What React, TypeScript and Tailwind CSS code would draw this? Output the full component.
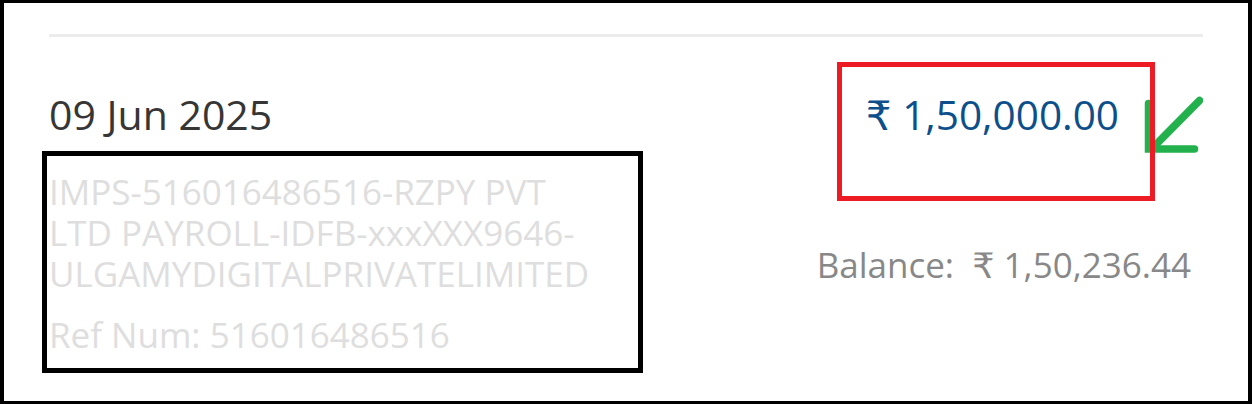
import React from 'react';

const font = { fontFamily: '"Open Sans", "DejaVu Sans", sans-serif' };

const CreditArrow = () => (
  <svg width="60" height="60" viewBox="0 0 60 60" fill="none" className="mt-[10px] shrink-0">
    <path d="M5.5 7.5 V53 H51.5" stroke="#22b14c" strokeWidth="7.5" strokeLinecap="round" strokeLinejoin="miter" />
    <path d="M56.5 4.5 L12 49.5" stroke="#22b14c" strokeWidth="7.5" strokeLinecap="round" />
  </svg>
);

const App: React.FC = () => {
  return (
    <div
      className="relative w-[1252px] h-[404px] bg-white border-black border-x-4 border-y-[3px] px-[45px] overflow-hidden"
      style={font}
    >
      <div className="mt-[31px] h-[3px] bg-[#ececec]" />

      <div className="flex justify-between items-start pt-[49px]">
        <div>
          <div className="text-[41px] leading-[56px] text-[#363636]">09 Jun 2025</div>
          <div className="mt-[29px] text-[35px] leading-[41px] text-[#dedede]">
            <div>IMPS-516016486516-RZPY PVT</div>
            <div>LTD PAYROLL-IDFB-xxxXXX9646-</div>
            <div>ULGAMYDIGITALPRIVATELIMITED</div>
            <div className="mt-[20px]">Ref Num: 516016486516</div>
          </div>
        </div>

        <div className="flex flex-col items-end">
          <div className="flex items-start gap-[24px]">
            <div className="mt-[2px] text-[40.5px] leading-[54px] text-[#0d4f8b]">₹ 1,50,000.00</div>
            <CreditArrow />
          </div>
          <div className="mt-[85px] mr-[12px] text-[35px] leading-[48px] text-[#888888]">
            Balance:&nbsp; ₹ 1,50,236.44
          </div>
        </div>
      </div>

      {/* annotation boxes drawn over the screenshot */}
      <div className="absolute left-[38px] top-[148px] w-[601px] h-[222px] border-[5px] border-black" />
      <div className="absolute left-[833px] top-[59px] w-[318px] h-[139px] border-[5px] border-[#ed1c24]" />
    </div>
  );
};

export default App;
